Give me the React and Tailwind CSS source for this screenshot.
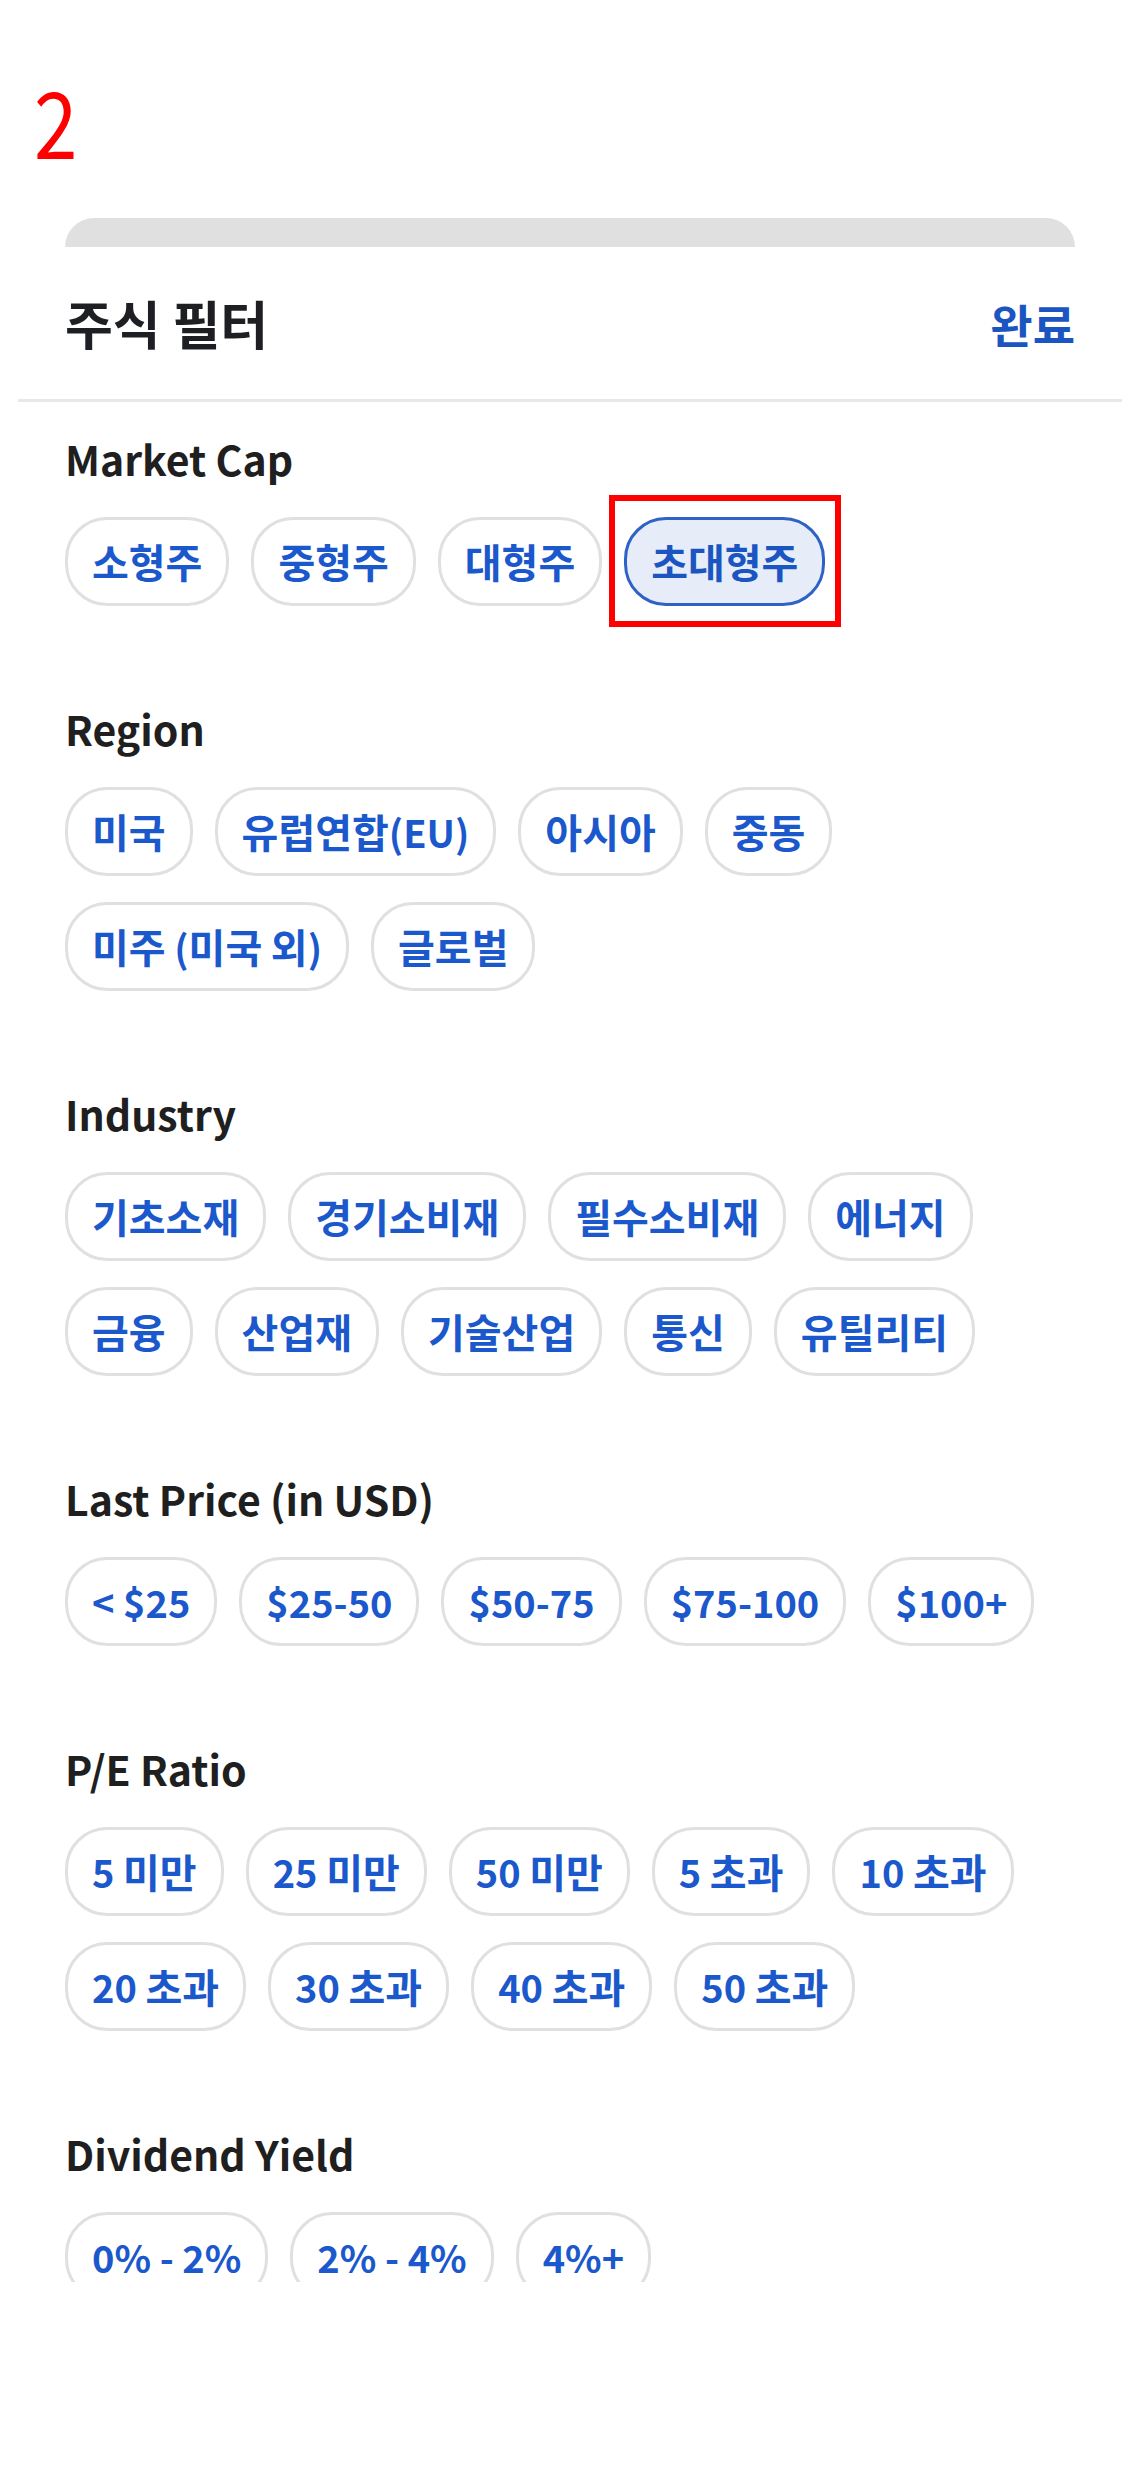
import React, { useState } from "react";

const SECTIONS = [
  { title: "Market Cap", items: ["소형주", "중형주", "대형주", "초대형주"] },
  { title: "Region", items: ["미국", "유럽연합(EU)", "아시아", "중동", "미주 (미국 외)", "글로벌"] },
  {
    title: "Industry",
    items: ["기초소재", "경기소비재", "필수소비재", "에너지", "금융", "산업재", "기술산업", "통신", "유틸리티"],
  },
  { title: "Last Price (in USD)", items: ["< $25", "$25-50", "$50-75", "$75-100", "$100+"] },
  {
    title: "P/E Ratio",
    items: ["5 미만", "25 미만", "50 미만", "5 초과", "10 초과", "20 초과", "30 초과", "40 초과", "50 초과"],
  },
  { title: "Dividend Yield", items: ["0% - 2%", "2% - 4%", "4%+"] },
];

// hangul runs are a touch larger than latin in the original font
function Label({ text }) {
  const parts = text.split(/([\uAC00-\uD7A3]+)/).filter(Boolean);
  return parts.map((p, i) =>
    /[\uAC00-\uD7A3]/.test(p) ? (
      <span key={i} className="text-[40px]">
        {p}
      </span>
    ) : (
      <span key={i}>{p}</span>
    )
  );
}

function Chip({ label, selected, highlight }) {
  const chip = (
    <button
      className={
        selected
          ? "h-[89px] px-[24px] rounded-[42px] border-[3px] border-[#2e62c6] bg-[#e6edf8] text-[38px] leading-[50px] font-semibold text-[#1b55c2] whitespace-pre"
          : "h-[89px] px-[24px] rounded-[42px] border-[3px] border-[#e0e0e0] bg-white text-[38px] leading-[50px] font-semibold text-[#1b58cc] whitespace-pre"
      }
    >
      <Label text={label} />
    </button>
  );
  if (!highlight) return chip;
  // red annotation box around the selected chip
  return (
    <div className="relative">
      {chip}
      <div className="absolute -left-[15px] -right-[16px] -top-[22px] -bottom-[21px] border-[6px] border-[#ff0000] pointer-events-none" />
    </div>
  );
}

export default function App() {
  const [selected] = useState("초대형주");

  return (
    <div
      className="w-[1140px] h-[2489px] bg-white overflow-hidden text-[#1f1f1f]"
      style={{ fontFamily: '"Noto Sans CJK KR", "Noto Sans", sans-serif' }}
    >
      <div className="pl-[34px] pt-[73px] text-[92px] leading-[92px] font-normal text-[#ff0000]">
        <span className="inline-block origin-left scale-x-[0.85]">2</span>
      </div>

      <div className="mx-[65px] mt-[53px] h-[29px] rounded-t-[30px] bg-[#e0e0e0]" />

      <div className="h-[152px] px-[65px] flex items-center justify-between">
        <h1 className="text-[52px] font-bold leading-[60px] text-[#1e1f22]">주식 필터</h1>
        <button className="text-[46px] font-semibold leading-[60px] text-[#1b55c2]">완료</button>
      </div>
      <div className="mx-[18px] h-[3px] bg-[#e8e8e8]" />

      <div className="h-[1880px] overflow-hidden">
        <div className="px-[65px] pt-[21px] flex flex-col gap-[87px]">
          {SECTIONS.map((s) => (
            <section key={s.title}>
              <h2 className="pt-[11px] text-[41px] font-semibold leading-[48px] text-[#1f1f1f]">{s.title}</h2>
              <div className="mt-[35px] flex flex-wrap gap-x-[22px] gap-y-[26px]">
                {s.items.map((it) => (
                  <Chip key={it} label={it} selected={it === selected} highlight={it === selected} />
                ))}
              </div>
            </section>
          ))}
        </div>
      </div>
    </div>
  );
}
